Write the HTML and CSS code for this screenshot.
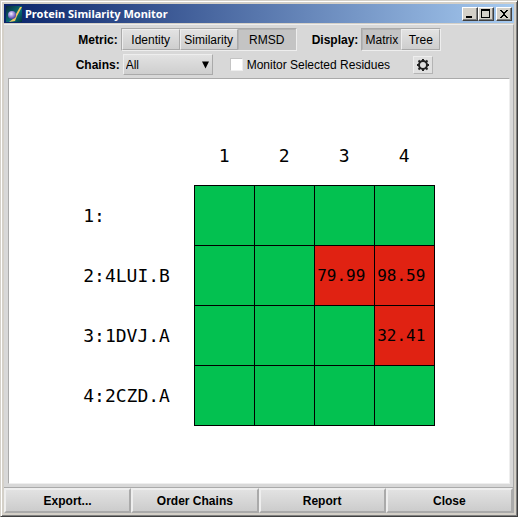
FILE: index.html
```html
<!DOCTYPE html>
<html lang="en">
<head>
<meta charset="utf-8">
<title>Protein Similarity Monitor</title>
<link rel="stylesheet" href="styles.css">
</head>
<body>
<div class="window">
  <header class="titlebar">
    <svg class="app-icon" viewBox="0 0 16 16" aria-hidden="true">
      <defs>
        <linearGradient id="sky" x1="0" y1="0" x2="1" y2="1"><stop offset="0" stop-color="#0b2a38"/><stop offset=".6" stop-color="#087078"/><stop offset="1" stop-color="#04343c"/></linearGradient>
        <radialGradient id="ball" cx=".4" cy=".35" r=".6"><stop offset="0" stop-color="#f4f0ff"/><stop offset=".5" stop-color="#a898e0"/><stop offset="1" stop-color="#5c4ca8"/></radialGradient>
      </defs>
      <rect width="16" height="16" fill="url(#sky)"/>
      <path d="M16 1 L11 10 L9 15 L3 16 L7 13 L10 8 L14 1Z" fill="#f0c860"/>
      <circle cx="6" cy="9" r="4" fill="url(#ball)"/>
    </svg>
    <h1 class="title">Protein Similarity Monitor</h1>
    <div class="window-buttons">
      <button class="caption" type="button" aria-label="Minimize"><svg viewBox="0 0 12 10" aria-hidden="true"><path d="M2 7h6v2H2z"/></svg></button>
      <button class="caption" type="button" aria-label="Maximize"><svg viewBox="0 0 12 10" aria-hidden="true"><path fill-rule="evenodd" d="M1 0h9v9H1zM2 2v6h7V2z"/></svg></button>
      <button class="caption caption-close" type="button" aria-label="Close window"><svg viewBox="0 0 12 10" aria-hidden="true"><path d="M2 1h2v1h1v1h2V2h1V1h2v1H9v1H8v1H7v2h1v1h1v1h1v1H8V8H7V7H5v1H4v1H2V8h1V7h1V6h1V4H4V3H3V2H2z"/></svg></button>
    </div>
  </header>
  <main class="content">
    <div class="toolbar">
      <div class="row">
        <span class="label" id="metric">Metric:</span>
        <div class="segments" role="group" aria-labelledby="metric">
          <button class="segment metric" type="button" aria-pressed="false">Identity</button>
          <button class="segment metric" type="button" aria-pressed="false">Similarity</button>
          <button class="segment metric" type="button" aria-pressed="true">RMSD</button>
        </div>
        <span class="label label-display" id="display">Display:</span>
        <div class="segments" role="group" aria-labelledby="display">
          <button class="segment display" type="button" aria-pressed="true">Matrix</button>
          <button class="segment display" type="button" aria-pressed="false">Tree</button>
        </div>
      </div>
      <div class="row">
        <label class="label" for="chains">Chains:</label>
        <div class="dropdown">
          <select id="chains"><option>All</option></select>
          <svg class="arrow" viewBox="0 0 8 8" aria-hidden="true"><path d="M0 0h8L4 8z"/></svg>
        </div>
        <label class="check"><input type="checkbox">Monitor Selected Residues</label>
        <button class="gear" type="button" aria-label="Settings">
          <svg viewBox="0 0 14 14" aria-hidden="true"><circle cx="7" cy="7" r="4" fill="none" stroke="#222" stroke-width="2"/><path d="M7 1v2M7 11v2M1 7h2M11 7h2M2.500 2.500l2 2M9.500 9.500l2 2M11.500 2.500l-2 2M4.500 9.500l-2 2" fill="none" stroke="#222" stroke-width="2"/></svg>
        </button>
      </div>
    </div>
    <section class="canvas" aria-label="Similarity matrix">
      <table class="matrix">
        <thead>
          <tr><td></td><th scope="col">1</th><th scope="col">2</th><th scope="col">3</th><th scope="col">4</th></tr>
        </thead>
        <tbody>
          <tr><th scope="row">1:</th><td></td><td></td><td></td><td></td></tr>
          <tr><th scope="row">2:4LUI.B</th><td></td><td></td><td class="far">79.99</td><td class="far">98.59</td></tr>
          <tr><th scope="row">3:1DVJ.A</th><td></td><td></td><td></td><td class="far">32.41</td></tr>
          <tr><th scope="row">4:2CZD.A</th><td></td><td></td><td></td><td></td></tr>
        </tbody>
      </table>
    </section>
    <footer class="actions">
      <button class="action" type="button">Export...</button>
      <button class="action" type="button">Order Chains</button>
      <button class="action" type="button">Report</button>
      <button class="action" type="button">Close</button>
    </footer>
  </main>
</div>
</body>
</html>
```
FILE: styles.css
```css
* {
  box-sizing: border-box;
}

body {
  margin: 0;
  font: 12px/16px "Liberation Sans", Arial, sans-serif;
  color: #000;
}

button,
select {
  margin: 0;
  padding: 0;
  border-radius: 0;
  font: inherit;
  color: inherit;
}

.window {
  display: flex;
  flex-direction: column;
  min-height: 100vh;
  padding: 2px;
  background: #d4d0c8;
  border: 1px solid #d4d0c8;
  border-right-color: #404040;
  border-bottom-color: #404040;
  box-shadow: inset 1px 1px #fff, inset -1px -1px #808080;
}

.titlebar {
  display: flex;
  align-items: center;
  height: 19px;
  margin: 1px 1px 0;
  padding: 0 2px;
  gap: 3px;
  background: linear-gradient(90deg, #0a246a, #a6caf0);
}

.app-icon {
  width: 16px;
  height: 16px;
}

.title {
  flex: 1;
  margin: 0;
  font: bold 11px/16px "Noto Sans", sans-serif;
  color: #fff;
}

.window-buttons {
  display: flex;
}

.caption {
  width: 16px;
  height: 14px;
  background: #d4d0c8;
  border: 1px solid;
  border-color: #fff #404040 #404040 #fff;
  box-shadow: inset -1px -1px #808080;
}

.caption svg {
  display: block;
  width: 12px;
  height: 10px;
  margin: 1px;
  shape-rendering: crispEdges;
}

.caption-close {
  margin-left: 2px;
}

.content {
  display: flex;
  flex: 1;
  flex-direction: column;
  margin: 1px 1px 1px;
  background: #d8d8d8;
  border-top: 1px solid #eee;
  border-right: 1px solid #aaa;
}

.toolbar {
  display: flex;
  flex-direction: column;
  gap: 3px;
  width: max-content;
  margin: 3px auto;
}

.row {
  display: flex;
  align-items: center;
  gap: 3px;
}

.label {
  min-width: 42px;
  text-align: right;
  font-weight: bold;
}

.label-display {
  margin-left: 12px;
}

.segments {
  display: flex;
  border: 1px solid;
  border-color: #aaa #eee #eee #aaa;
}

.segment {
  height: 21px;
  background: linear-gradient(#e2e2e2, #cecece);
  border: 1px solid;
  border-color: #eee #aaa #aaa #eee;
}

.segment[aria-pressed="true"] {
  background: #c4c4c4;
  border-color: #b4b4b4 #c4c4c4 #c4c4c4 #b4b4b4;
}

.metric {
  width: 58px;
}

.display {
  width: 39px;
}

.dropdown {
  display: grid;
  align-items: center;
  width: 90px;
}

.dropdown select {
  grid-area: 1 / 1;
  width: 100%;
  height: 21px;
  padding: 0 2px;
  appearance: none;
  background: linear-gradient(#e2e2e2, #cecece);
  border: 1px solid;
  border-color: #eee #aaa #aaa #eee;
}

.arrow {
  grid-area: 1 / 1;
  justify-self: end;
  width: 7px;
  height: 8px;
  margin-right: 4px;
  pointer-events: none;
}

.check {
  display: flex;
  align-items: center;
  gap: 4px;
  margin-left: 14px;
}

.check input {
  width: 13px;
  height: 13px;
  margin: 0;
  appearance: none;
  background: #fff;
  border: 1px solid;
  border-color: #c4c4c4 #eee #eee #c4c4c4;
}

.gear {
  display: grid;
  place-items: center;
  width: 20px;
  height: 18px;
  margin-left: 20px;
  background: #e0e0e0;
  border: 1px solid;
  border-color: #eee #b4b4b4 #b4b4b4 #eee;
}

.gear svg {
  width: 14px;
  height: 14px;
}

.canvas {
  display: flex;
  flex: 1;
  align-items: center;
  justify-content: center;
  margin: 0 3px 3px 4px;
  background: #fff;
  border: 1px solid;
  border-color: #aaa #eee #eee #aaa;
}

.matrix {
  border-collapse: collapse;
  font: 18px/20px "DejaVu Sans Mono", monospace;
}

.matrix th,
.matrix td {
  width: 60px;
  height: 60px;
  padding: 0;
  font-weight: normal;
  text-align: center;
}

.matrix thead th,
.matrix thead td {
  height: 50px;
  padding-bottom: 10px;
}

.matrix tbody th {
  width: 111px;
  text-align: left;
}

.matrix tbody td {
  background: #03c150;
  border: 1px solid #000;
  font-size: 16px;
}

.matrix tbody .far {
  background: #e02212;
  padding-right: 6px;
}

.actions {
  display: grid;
  grid-template-columns: repeat(4, 1fr);
  border-top: 1px solid #aaa;
}

.action {
  height: 25px;
  font-weight: bold;
  background: linear-gradient(#e2e2e2, #cccccc);
  border: 2px solid;
  border-color: #eee #aaa #aaa #eee;
}
```
